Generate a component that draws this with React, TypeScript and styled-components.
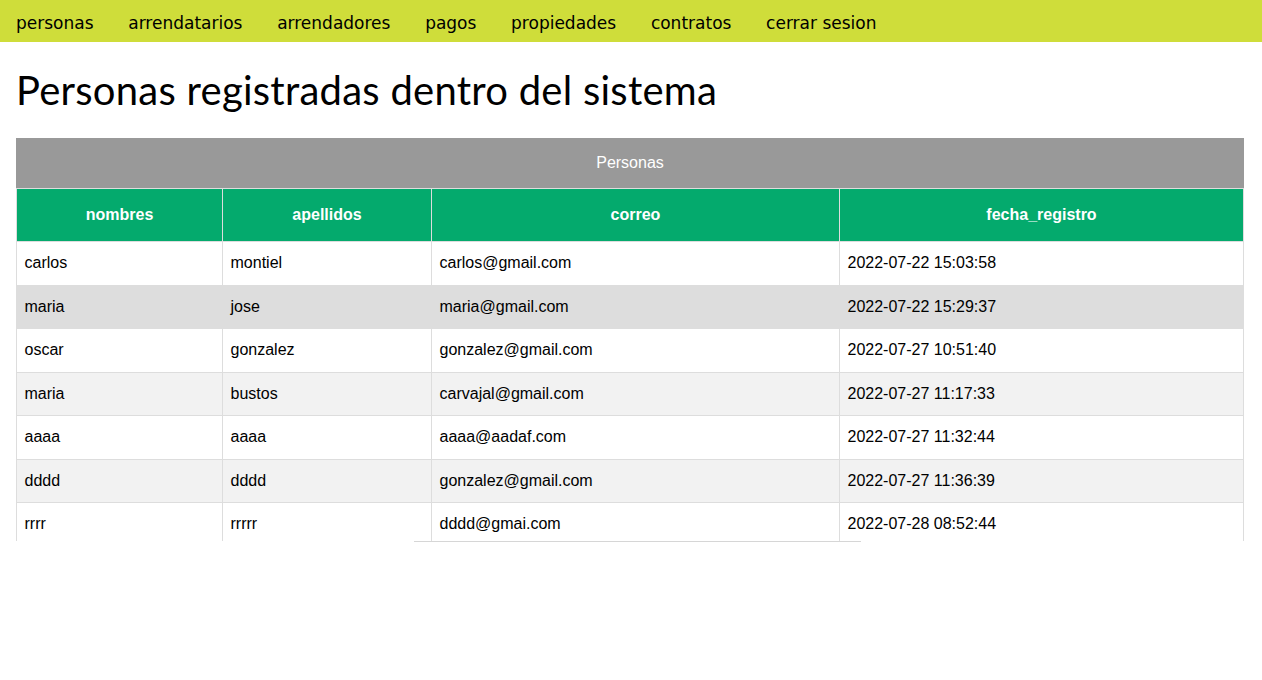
import React from "react";
import styled, { createGlobalStyle } from "styled-components";

const Global = createGlobalStyle`
  html, body { margin: 0; padding: 0; background: #ffffff; }
  body { font-family: "Liberation Sans", Arial, sans-serif; color: #000; }
`;

const NavBar = styled.nav`
  box-sizing: border-box;
  display: flex;
  align-items: center;
  height: 42px;
  padding: 3px 16px 0;
  gap: 34.7px;
  background: #cfdd3a;
`;

const NavLink = styled.a`
  font-family: "DejaVu Sans", Verdana, sans-serif;
  font-size: 17px;
  color: #000;
  text-decoration: none;
  cursor: pointer;
`;

const Main = styled.main`
  padding: 0 18px 0 16px;
`;

const Title = styled.h1`
  font-family: Lato, "Noto Sans", sans-serif;
  font-weight: 400;
  font-size: 40px;
  letter-spacing: 0.25px;
  line-height: 52px;
  margin: 22px 0 22px;
`;

const TableWrap = styled.div`
  height: 403px;
  overflow: hidden;
`;

const Table = styled.table`
  width: 100%;
  border-collapse: collapse;
  font-size: 16px;
  table-layout: fixed;
`;

const Caption = styled.caption`
  background: #999999;
  color: #ffffff;
  padding: 16px 0;
  line-height: 18px;
`;

const HeadCell = styled.th`
  background: #04aa6d;
  color: #ffffff;
  font-weight: 700;
  padding: 16px 8px;
  line-height: 20px;
  border: 1px solid #dddddd;
  text-align: center;
`;

const Row = styled.tr<{ $hover?: boolean }>`
  &:nth-child(even) { background: #f2f2f2; }
  ${(p) => (p.$hover ? "&&{ background: #dddddd; }" : "")}
`;

const Cell = styled.td`
  padding: 12px 8px 12px 7.5px;
  line-height: 18.5px;
  border: 1px solid #dddddd;
  text-align: left;
`;

const Divider = styled.div`
  margin-left: 398px;
  width: 447px;
  height: 1px;
  background: #d6d6d6;
`;

const navItems = [
  "personas",
  "arrendatarios",
  "arrendadores",
  "pagos",
  "propiedades",
  "contratos",
  "cerrar sesion",
];

const rows = [
  ["carlos", "montiel", "carlos@gmail.com", "2022-07-22 15:03:58"],
  ["maria", "jose", "maria@gmail.com", "2022-07-22 15:29:37"],
  ["oscar", "gonzalez", "gonzalez@gmail.com", "2022-07-27 10:51:40"],
  ["maria", "bustos", "carvajal@gmail.com", "2022-07-27 11:17:33"],
  ["aaaa", "aaaa", "aaaa@aadaf.com", "2022-07-27 11:32:44"],
  ["dddd", "dddd", "gonzalez@gmail.com", "2022-07-27 11:36:39"],
  ["rrrr", "rrrrr", "dddd@gmai.com", "2022-07-28 08:52:44"],
];

const widths = ["206px", "209px", "408px", "auto"];

export default function App() {
  return (
    <>
      <Global />
      <NavBar>
        {navItems.map((n) => (
          <NavLink key={n}>{n}</NavLink>
        ))}
      </NavBar>
      <Main>
        <Title>Personas registradas dentro del sistema</Title>
        <TableWrap>
          <Table>
            <Caption>Personas</Caption>
            <colgroup>
              {widths.map((w, i) => (
                <col key={i} style={{ width: w }} />
              ))}
            </colgroup>
            <thead>
              <tr>
                <HeadCell>nombres</HeadCell>
                <HeadCell>apellidos</HeadCell>
                <HeadCell>correo</HeadCell>
                <HeadCell>fecha_registro</HeadCell>
              </tr>
            </thead>
            <tbody>
              {rows.map((r, i) => (
                <Row key={i} $hover={i === 1}>
                  {r.map((c, j) => (
                    <Cell key={j}>{c}</Cell>
                  ))}
                </Row>
              ))}
            </tbody>
          </Table>
        </TableWrap>
        <Divider />
      </Main>
    </>
  );
}
